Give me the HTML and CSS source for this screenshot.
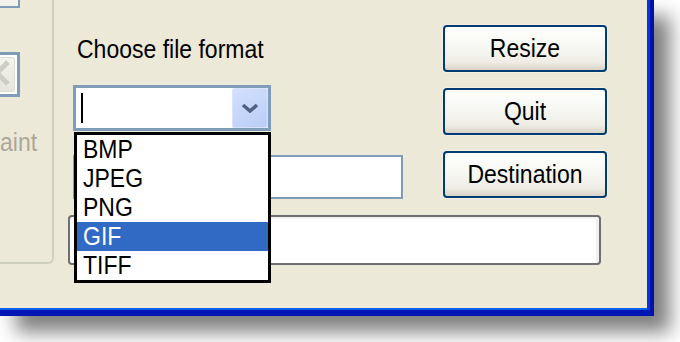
FILE: index.html
```html
<!DOCTYPE html>
<html>
<head>
<meta charset="utf-8">
<link rel="stylesheet" href="styles.css">
</head>
<body>
<div class="page">
<div class="dialog">
  <div class="group">
    <div class="topbox"></div>
    <div class="spin">
      <div class="spin-btn">
        <svg width="30" height="35" viewBox="0 0 30 35"><path d="M23 5 L12 16 L23 27" fill="none" stroke="#cfcec5" stroke-width="5"/></svg>
      </div>
    </div>
    <div class="paint"><span class="t">aint</span></div>
  </div>
  <div class="main">
    <div class="top-row">
      <div class="left-col">
        <div class="label"><span class="t">Choose file format</span></div>
        <div class="combo">
          <span class="caret"></span>
          <span class="drop-btn"><svg width="18" height="10" viewBox="0 0 18 10"><path d="M2 2 L9 8 L16 2" fill="none" stroke="#4d6185" stroke-width="3.5"/></svg></span>
          <ul class="list">
            <li><span class="t">BMP</span></li>
            <li><span class="t">JPEG</span></li>
            <li><span class="t">PNG</span></li>
            <li class="sel"><span class="t">GIF</span></li>
            <li><span class="t">TIFF</span></li>
          </ul>
        </div>
        <div class="field"></div>
      </div>
      <div class="buttons">
        <button class="btn"><span class="t">Resize</span></button>
        <button class="btn"><span class="t">Quit</span></button>
        <button class="btn"><span class="t">Destination</span></button>
      </div>
    </div>
    <div class="bar"></div>
  </div>
</div>
</div>
</body>
</html>
```
FILE: styles.css
```css
html, body {
  margin: 0;
  background: #ffffff;
}
body {
  font-family: "Liberation Sans", Arial, sans-serif;
  font-size: 23px;
  color: #000;
}
.page {
  width: 680px;
  height: 342px;
  overflow: hidden;
  background: #ffffff;
}
.t {
  display: inline-block;
  transform: scaleY(1.14);
}
.dialog {
  box-sizing: border-box;
  width: 654px;
  height: 316px;
  background: #ece9d8;
  border-right: 4px solid #0011a6;
  border-bottom: 6px solid #0016b4;
  box-shadow: 16px 16px 18px rgba(0, 0, 0, 0.5), inset -3px 0 0 #0a35dc, inset 0 -2px 0 #1060f0;
  display: flex;
  align-items: flex-start;
}
.group {
  box-sizing: border-box;
  width: 54px;
  height: 264px;
  flex-shrink: 0;
  border-right: 2px solid #d0d0bf;
  border-bottom: 2px solid #d0d0bf;
  border-bottom-right-radius: 6px;
  display: flex;
  flex-direction: column;
  align-items: flex-start;
}
.topbox {
  box-sizing: border-box;
  width: 32px;
  height: 20px;
  margin: -12px 0 0 -12px;
  border: 2px solid #7f9db9;
  background: #f3f2ec;
}
.spin {
  box-sizing: border-box;
  width: 40px;
  height: 45px;
  margin: 44px 0 0 -20px;
  border: 3px solid #7f9db9;
  background: #fff;
  padding: 2px;
}
.spin-btn {
  height: 100%;
  border-radius: 3px;
  background: linear-gradient(#f4f4ef, #e6e5dc);
  box-shadow: inset 0 0 0 1px #deddd3;
  overflow: hidden;
}
.spin-btn svg {
  display: block;
}
.paint {
  margin: 32px 0 0 0;
  color: #aca899;
  line-height: 27px;
}
.main {
  flex: 1;
  padding: 25px 0 0 19px;
  display: flex;
  flex-direction: column;
}
.top-row {
  display: flex;
  gap: 40px;
  align-items: flex-start;
}
.left-col {
  width: 330px;
  padding-top: 11px;
  display: flex;
  flex-direction: column;
  align-items: flex-start;
}
.label {
  line-height: 27px;
  padding-left: 4px;
}
.combo {
  position: relative;
  margin-top: 22px;
  box-sizing: border-box;
  width: 198px;
  height: 46px;
  border: 3px solid #7f9db9;
  background: #fff;
  display: flex;
  align-items: center;
  padding-left: 5px;
}
.caret {
  width: 2px;
  height: 30px;
  background: #000;
}
.drop-btn {
  margin-left: auto;
  width: 36px;
  height: 40px;
  border-radius: 3px;
  background: linear-gradient(150deg, #d4e0fd, #b9cdf7);
  box-shadow: inset 0 0 0 1px #d9e3fd;
  display: flex;
  align-items: center;
  justify-content: center;
}
.list {
  position: absolute;
  left: -2px;
  top: 44px;
  box-sizing: border-box;
  width: 197px;
  margin: 0;
  padding: 0;
  list-style: none;
  border: 3px solid #000;
  background: #fff;
}
.list li {
  height: 29px;
  line-height: 29px;
  padding-left: 6px;
}
.list li.sel {
  background: #316ac5;
  color: #fff;
}
.field {
  margin-top: 24px;
  box-sizing: border-box;
  width: 330px;
  height: 44px;
  border: 2px solid #7f9db9;
  background: #fff;
}
.buttons {
  display: flex;
  flex-direction: column;
  gap: 16px;
  width: 164px;
}
.btn {
  box-sizing: border-box;
  height: 47px;
  padding: 0;
  border: 2px solid #003c74;
  border-radius: 4px;
  background: linear-gradient(#ffffff 0%, #f5f5f0 55%, #eeece4 82%, #d9d3c7 100%);
  box-shadow: 0 0 0 1px #f4f0e3;
  font: inherit;
  line-height: 27px;
  color: #000;
  display: flex;
  align-items: center;
  justify-content: center;
}
.bar {
  margin: 16px 0 0 -5px;
  box-sizing: border-box;
  width: 533px;
  height: 50px;
  border: 2px solid #6f6f6f;
  border-radius: 4px;
  background: #fff;
  box-shadow: inset -3px 0 0 #f0f0f0, inset 0 2px 0 #f3f3f3;
}
```
